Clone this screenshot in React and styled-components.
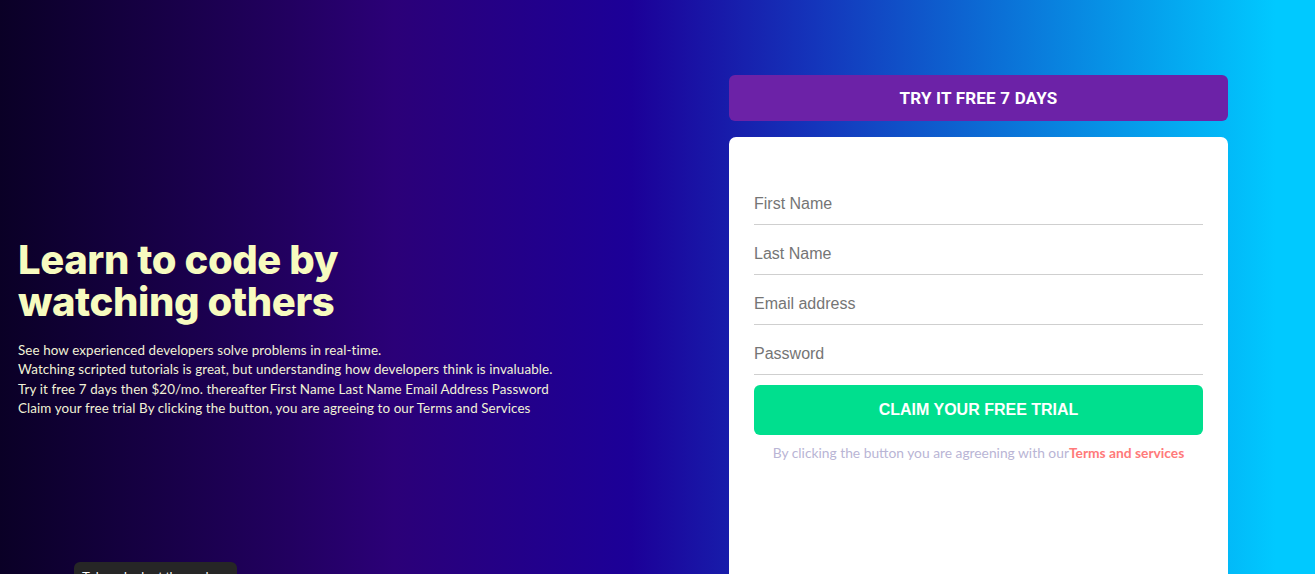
import React from "react";
import styled, { createGlobalStyle } from "styled-components";

const Global = createGlobalStyle`
  html, body { margin: 0; padding: 0; }
  body { font-family: "Liberation Sans", Arial, sans-serif; overflow: hidden; }
  * { box-sizing: border-box; }
`;

const Page = styled.main`
  position: relative;
  width: 1315px;
  height: 574px;
  overflow: hidden;
  background: linear-gradient(90deg, #0a0026 0%, #220060 22%, #2b0078 30%, #1c0098 48%, #1435bb 62%, #0a78da 78%, #00c9ff 97%, #00c9ff 100%);
  display: flex;
  align-items: flex-start;
  padding: 75px 87px 0 18px;
`;

const Intro = styled.section`
  width: 580px;
  padding-top: 164px;
  color: #f6f9c4;
`;

const Title = styled.h1`
  margin: 0 0 18px;
  font-family: Inter, "Open Sans", sans-serif;
  font-weight: 800;
  font-size: 40px;
  line-height: 42px;
  letter-spacing: -0.4px;
  color: #f7fbbf;
`;

const Lead = styled.p`
  margin: 0;
  font-family: Lato, "Open Sans", sans-serif;
  font-size: 13.4px;
  line-height: 19.4px;
  color: #f1f2d6;
  letter-spacing: 0.1px;
`;

const Side = styled.section`
  margin-left: auto;
  width: 499px;
  display: flex;
  flex-direction: column;
  gap: 16px;
`;

const Banner = styled.div`
  height: 46px;
  border-radius: 6px;
  background: #6c22a7;
  color: #fff;
  display: flex;
  align-items: center;
  justify-content: center;
  padding-bottom: 1px;
  font-family: Roboto, "Liberation Sans", sans-serif;
  font-weight: 700;
  font-size: 17px;
  letter-spacing: 0.2px;
`;

const Card = styled.form`
  background: #fff;
  border-radius: 7px;
  padding: 38px 25px 60px;
  min-height: 460px;
  display: flex;
  flex-direction: column;
`;

const Field = styled.input`
  height: 50px;
  border: none;
  border-bottom: 1px solid #cfcfcf;
  padding: 9px 0 0;
  font-family: "Liberation Sans", Arial, sans-serif;
  font-size: 16px;
  color: #333;
  outline: none;
  background: transparent;
  &::placeholder { color: #757575; }
`;

const Claim = styled.button`
  margin-top: 10px;
  height: 50px;
  border: none;
  border-radius: 6px;
  background: #00df8e;
  color: #fff;
  font-family: "Liberation Sans", Arial, sans-serif;
  font-weight: 700;
  font-size: 16px;
  cursor: pointer;
`;

const Note = styled.p`
  margin: 9px 0 0;
  text-align: center;
  font-family: Lato, "Open Sans", sans-serif;
  font-size: 13.8px;
  color: #b9b5d5;
  b { color: #ff7a7a; font-weight: 700; }
`;

const Tip = styled.div`
  position: absolute;
  left: 74px;
  top: 562px;
  width: 163px;
  height: 30px;
  border-radius: 6px;
  background: #262626;
  color: #fff;
  font-family: "Liberation Sans", Arial, sans-serif;
  font-size: 13px;
  padding: 7px 8px;
  white-space: nowrap;
  overflow: hidden;
`;

export default function App() {
  return (
    <>
      <Global />
      <Page>
        <Intro>
          <Title>
            Learn to code by
            <br />
            watching others
          </Title>
          <Lead>
            See how experienced developers solve problems in real-time.
            <br />
            Watching scripted tutorials is great, but understanding how developers think is invaluable.
            <br />
            Try it free 7 days then $20/mo. thereafter First Name Last Name Email Address Password
            <br />
            Claim your free trial By clicking the button, you are agreeing to our Terms and Services
          </Lead>
        </Intro>
        <Side>
          <Banner>TRY IT FREE 7 DAYS</Banner>
          <Card onSubmit={(e) => e.preventDefault()}>
            <Field placeholder="First Name" />
            <Field placeholder="Last Name" />
            <Field type="email" placeholder="Email address" />
            <Field type="password" placeholder="Password" />
            <Claim type="submit">CLAIM YOUR FREE TRIAL</Claim>
            <Note>
              By clicking the button you are agreening with our<b>Terms and services</b>
            </Note>
          </Card>
        </Side>
        <Tip>Take a look at the code</Tip>
      </Page>
    </>
  );
}
